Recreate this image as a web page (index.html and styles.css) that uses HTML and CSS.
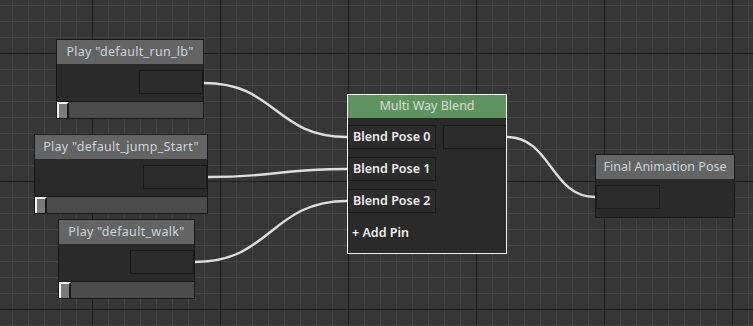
FILE: index.html
```html
<!DOCTYPE html>
<html>
<head>
<meta charset="utf-8">
<link rel="stylesheet" href="styles.css">
</head>
<body>
<div class="canvas">
  <svg class="wires" width="753" height="326" viewBox="0 0 753 326">
    <path d="M204 83 C 276 83, 275 137, 347 137" />
    <path d="M208 177 C 278 177, 277 169, 347 169" />
    <path d="M195 262 C 271 262, 271 201, 347 201" />
    <path d="M507 137 C 551 137, 551 197, 595 197" />
  </svg>

  <div class="node play n1">
    <div class="title">Play "default_run_lb"</div>
    <div class="body"><div class="pin out"></div></div>
    <div class="slider"><div class="thumb"></div></div>
  </div>

  <div class="node play n2">
    <div class="title">Play "default_jump_Start"</div>
    <div class="body"><div class="pin out"></div></div>
    <div class="slider"><div class="thumb"></div></div>
  </div>

  <div class="node play n3">
    <div class="title">Play "default_walk"</div>
    <div class="body"><div class="pin out"></div></div>
    <div class="slider"><div class="thumb"></div></div>
  </div>

  <div class="node blend">
    <div class="title green">Multi Way Blend</div>
    <div class="rows">
      <div class="row"><div class="pin in">Blend Pose 0</div><div class="pin out2"></div></div>
      <div class="row"><div class="pin in">Blend Pose 1</div></div>
      <div class="row"><div class="pin in">Blend Pose 2</div></div>
      <div class="add">+ Add Pin</div>
    </div>
  </div>

  <div class="node final">
    <div class="title">Final Animation Pose</div>
    <div class="body fbody"><div class="pin fin"></div></div>
  </div>
</div>
</body>
</html>
```

FILE: styles.css
```css
* { box-sizing: border-box; }
html, body { margin: 0; padding: 0; }
body { font-family: "Noto Sans", "DejaVu Sans", sans-serif; font-size: 12px; }

.canvas {
  position: relative;
  width: 753px;
  height: 326px;
  overflow: hidden;
  background-color: #363636;
  background-image:
    linear-gradient(to right, #1f1f1f 1px, transparent 1px),
    linear-gradient(to bottom, #1f1f1f 1px, transparent 1px),
    linear-gradient(to right, #444444 1px, transparent 1px),
    linear-gradient(to bottom, #444444 1px, transparent 1px);
  background-size: 128px 128px, 128px 128px, 16px 16px, 16px 16px;
  background-position: 92px 0, 0 53px, 12px 0, 0 5px;
}

.wires { position: absolute; left: 0; top: 0; }
.wires path { fill: none; stroke: #dedede; stroke-width: 2.4; }

.node {
  position: absolute;
  display: flex;
  flex-direction: column;
  background: #2a2a2a;
  border: 1px solid #181818;
}
.title {
  height: 24px;
  flex: none;
  background: #646464;
  color: #cdd3d9;
  text-align: center;
  font-size: 12.5px;
  line-height: 23px;
  white-space: nowrap;
}
.play .title { letter-spacing: 0.3px; }
.title.green { background: #5f9461; color: #d6ddd4; }

.body {
  flex: 1;
  display: flex;
  justify-content: flex-end;
  padding-top: 6px;
}
.pin {
  height: 24px;
  border: 1px solid #1b1b1b;
  background: #2c2c2c;
}
.pin.out { width: 64px; }

.slider {
  height: 17px;
  flex: none;
  background: #4b4b4b;
  border-top: 1px solid #161616;
  position: relative;
}
.thumb {
  position: absolute;
  left: 0;
  top: 0;
  width: 12px;
  height: 16px;
  background: #7a7a7a;
  border-left: 2px solid #f4f4f4;
  border-top: 2px solid #f4f4f4;
  border-right: 2px solid #1a1a1a;
}

.n1 { left: 56px; top: 39px; width: 148px; height: 80px; }
.n2 { left: 34px; top: 134px; width: 174px; height: 80px; }
.n3 { left: 58px; top: 219px; width: 137px; height: 80px; }

.blend {
  left: 347px; top: 94px; width: 160px; height: 160px;
  border: 1px solid #f2f2f2;
}
.blend .title { height: 23px; line-height: 22px; }
.rows {
  display: flex;
  flex-direction: column;
  gap: 8px;
  padding-top: 7px;
}
.row { display: flex; gap: 7px; }
.pin.in {
  width: 88px;
  color: #ececec;
  font-weight: 600;
  font-size: 12.5px;
  padding-left: 4px;
  line-height: 22px;
  white-space: nowrap;
}
.pin.out2 { flex: 1; }
.add {
  color: #f0f0f0;
  font-weight: 600;
  font-size: 12.5px;
  padding-left: 4px;
  padding-top: 3px;
}

.final { left: 595px; top: 154px; width: 140px; height: 64px; }
.fbody { justify-content: flex-start; }
.pin.fin { width: 64px; }
```
